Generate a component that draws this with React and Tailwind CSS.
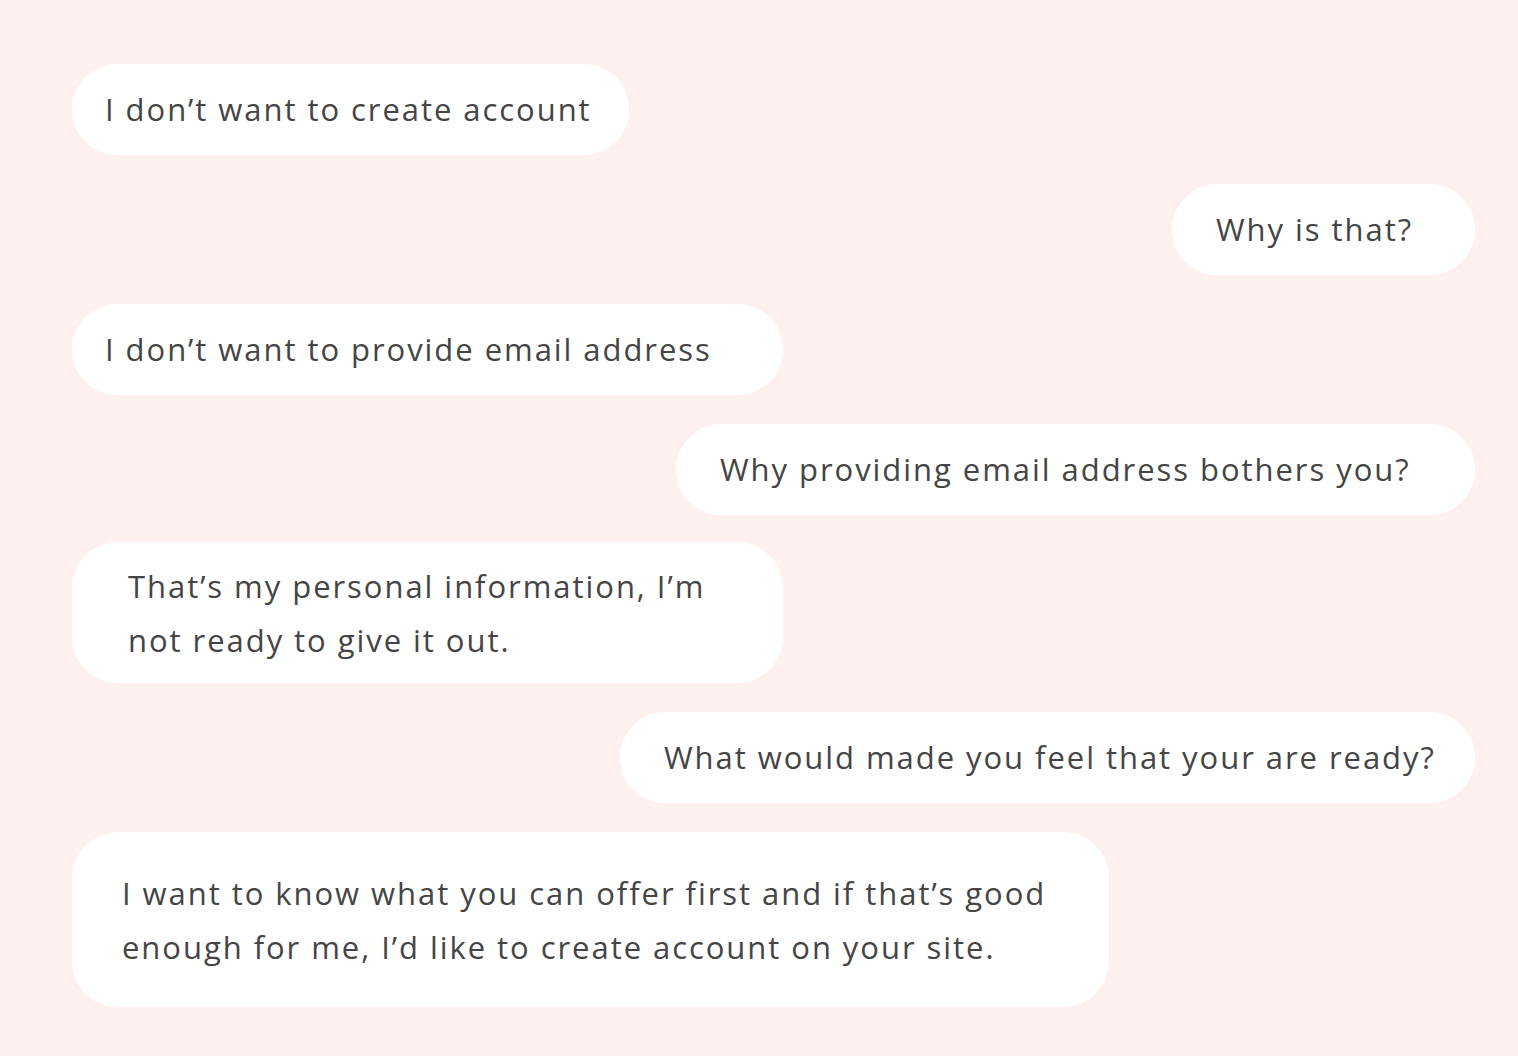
const font = { fontFamily: '"Open Sans", "Liberation Sans", sans-serif' };

export default function App() {
  return (
    <div className="min-h-[1056px] w-full bg-[#fff0f0] pt-[64px] pl-[72px] pr-[43px] text-[#454545]" style={font}>
      <div className="flex flex-col gap-[29px] text-[31px] tracking-[1.95px]">
        <div className="self-start flex items-center h-[91px] w-[557px] rounded-full bg-white pl-[33px]">
          I don’t want to create account
        </div>
        <div className="self-end flex items-center h-[91px] w-[303px] rounded-full bg-white pl-[44px]">
          Why is that?
        </div>
        <div className="self-start flex items-center h-[91px] w-[711px] rounded-full bg-white pl-[33px]">
          I don’t want to provide email address
        </div>
        <div className="self-end flex items-center h-[91px] w-[799px] rounded-full bg-white pl-[44px]">
          Why providing email address bothers you?
        </div>
        <div className="self-start -mt-[2px] flex items-center h-[141px] w-[711px] rounded-[46px] bg-white pl-[56px] leading-[54px]">
          <p>
            That’s my personal information, I’m
            <br />
            not ready to give it out.
          </p>
        </div>
        <div className="self-end flex items-center h-[91px] w-[855px] rounded-full bg-white pl-[44px]">
          What would made you feel that your are ready?
        </div>
        <div className="self-start flex items-center h-[175px] w-[1037px] rounded-[46px] bg-white pl-[50px] leading-[54px]">
          <p>
            I want to know what you can offer first and if that’s good
            <br />
            enough for me, I’d like to create account on your site.
          </p>
        </div>
      </div>
    </div>
  );
}
